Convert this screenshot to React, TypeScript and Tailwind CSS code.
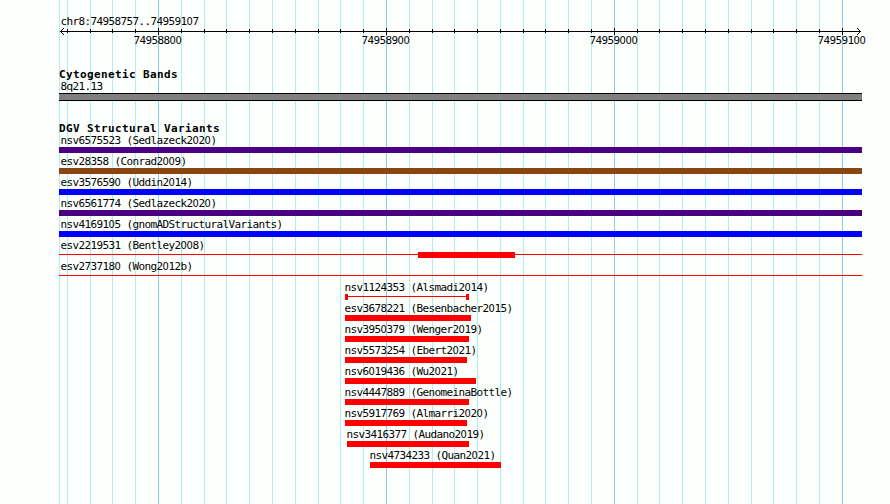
import React from "react";

const MAJOR = [158, 386, 614, 842];
const MINOR = [
  67, 90, 112, 135, 181, 204, 226, 249, 272, 295, 318, 340, 363, 409, 432, 454, 477,
  500, 523, 545, 568, 591, 637, 659, 682, 705, 728, 751, 773, 796, 819,
];
const TICK_LABELS = ["74958800", "74958900", "74959000", "74959100"];

type Shape = "bar" | "line" | "block" | "capped";
type Variant = { name: string; start: number; end: number; color: string; shape: Shape };

const full = (name: string, color: string, shape: Shape = "bar"): Variant => ({
  name, start: 59, end: 862, color, shape,
});
const gain = (name: string, start: number, end: number, shape: Shape = "bar"): Variant => ({
  name, start, end, color: "bg-[#ff0000]", shape,
});

const VARIANTS: Variant[] = [
  full("nsv6575523 (Sedlazeck2020)", "bg-[#4b0082]"),
  full("esv28358 (Conrad2009)", "bg-[#8b4513]"),
  full("esv3576590 (Uddin2014)", "bg-[#0000ff]"),
  full("nsv6561774 (Sedlazeck2020)", "bg-[#4b0082]"),
  full("nsv4169105 (gnomADStructuralVariants)", "bg-[#0000ff]"),
  full("esv2219531 (Bentley2008)", "bg-[#ff0000]", "block"),
  full("esv2737180 (Wong2012b)", "bg-[#ff0000]", "line"),
  gain("nsv1124353 (Alsmadi2014)", 345, 469, "capped"),
  gain("esv3678221 (Besenbacher2015)", 345, 471),
  gain("nsv3950379 (Wenger2019)", 345, 469),
  gain("nsv5573254 (Ebert2021)", 345, 467),
  gain("nsv6019436 (Wu2021)", 345, 476),
  gain("nsv4447889 (GenomeinaBottle)", 345, 469),
  gain("nsv5917769 (Almarri2020)", 345, 467),
  gain("nsv3416377 (Audano2019)", 347, 469),
  gain("nsv4734233 (Quan2021)", 370, 501),
];

// Zeros are set in the proportional face, which has no slash inside the digit.
function Mono({ children }: { children: string }) {
  return (
    <span className="block h-[14px] whitespace-pre pl-[0.4px] text-[11px] leading-[16px] tracking-[-0.623px]">
      {children.split(/(0)/).map((part, i) =>
        part === "0" ? (
          <span key={i} className="font-['DejaVu_Sans_Condensed','DejaVu_Sans',sans-serif] tracking-[-0.3px]">
            0
          </span>
        ) : (
          part
        ),
      )}
    </span>
  );
}

function Heading({ children }: { children: string }) {
  return (
    <h2 className="h-[14px] whitespace-pre pl-[59px] text-[11px] font-bold leading-[16px] tracking-[0.377px]">
      {children}
    </h2>
  );
}

function GridLines() {
  return (
    <svg className="absolute inset-0" width="890" height="504" shapeRendering="crispEdges">
      {[59, ...MINOR].map((x) => (
        <rect key={x} x={x} y="0" width="1" height="504" fill="#afeeee" />
      ))}
      {MAJOR.map((x) => (
        <rect key={x} x={x} y="0" width="1" height="504" fill="#87ceeb" />
      ))}
    </svg>
  );
}

function Ruler() {
  return (
    <svg className="block" width="890" height="7" shapeRendering="crispEdges">
      <rect x="60" y="3" width="801" height="1" />
      {MINOR.map((x) => (
        <rect key={x} x={x} y="1" width="1" height="4" />
      ))}
      {MAJOR.map((x) => (
        <rect key={x} x={x} y="0" width="1" height="7" />
      ))}
      {[1, 2, 3].map((d) => (
        <g key={d}>
          <rect x={60 + d} y={3 - d} width="1" height="1" />
          <rect x={60 + d} y={3 + d} width="1" height="1" />
          <rect x={860 - d} y={3 - d} width="1" height="1" />
          <rect x={860 - d} y={3 + d} width="1" height="1" />
        </g>
      ))}
    </svg>
  );
}

function Glyph({ shape, color }: { shape: Shape; color: string }) {
  if (shape === "bar") return <div className={`h-[6px] w-full ${color}`} />;
  if (shape === "line")
    return (
      <div className="h-[6px] pt-[2px]">
        <div className={`h-px w-full ${color}`} />
      </div>
    );
  if (shape === "block")
    return (
      <div className="flex h-[6px]">
        <div className={`mt-[2px] h-px w-[359px] ${color}`} />
        <div className={`h-[6px] w-[97px] ${color}`} />
        <div className={`mt-[2px] h-px flex-1 ${color}`} />
      </div>
    );
  return (
    <div className="flex h-[6px]">
      <div className={`h-[6px] w-[3px] ${color}`} />
      <div className={`mt-[2px] h-px flex-1 ${color}`} />
      <div className={`h-[6px] w-[3px] ${color}`} />
    </div>
  );
}

function Track({ variant: v }: { variant: Variant }) {
  const labelShift = v.start === 59 ? "ml-px" : "-ml-px";
  return (
    <div className="h-[21px]" style={{ marginLeft: v.start, width: v.end - v.start }}>
      <div className={labelShift}>
        <Mono>{v.name}</Mono>
      </div>
      <Glyph shape={v.shape} color={v.color} />
    </div>
  );
}

export default function App() {
  return (
    <div className="relative h-[504px] w-[890px] overflow-hidden bg-[#fdfffc] font-['DejaVu_Sans_Mono',monospace] text-black">
      <GridLines />
      <main className="relative">
        <header className="h-[67px] pt-[14px]">
          <div className="pl-[60px]">
            <Mono>chr8:74958757..74959107</Mono>
          </div>
          <Ruler />
          <div className="-mt-[2px] flex gap-[180px] pl-[133px]">
            {TICK_LABELS.map((label) => (
              <div key={label} className="w-[48px] shrink-0">
                <Mono>{label}</Mono>
              </div>
            ))}
          </div>
        </header>
        <section className="h-[54px]">
          <Heading>Cytogenetic Bands</Heading>
          <div className="-mt-[2px] pl-[60px]">
            <Mono>8q21.13</Mono>
          </div>
          <div className="ml-[59px] h-[8px] w-[803px] border-y border-black bg-[#808080]" />
        </section>
        <section>
          <Heading>DGV Structural Variants</Heading>
          <div className="-mt-[2px]">
            {VARIANTS.map((v) => (
              <Track key={v.name} variant={v} />
            ))}
          </div>
        </section>
      </main>
    </div>
  );
}
